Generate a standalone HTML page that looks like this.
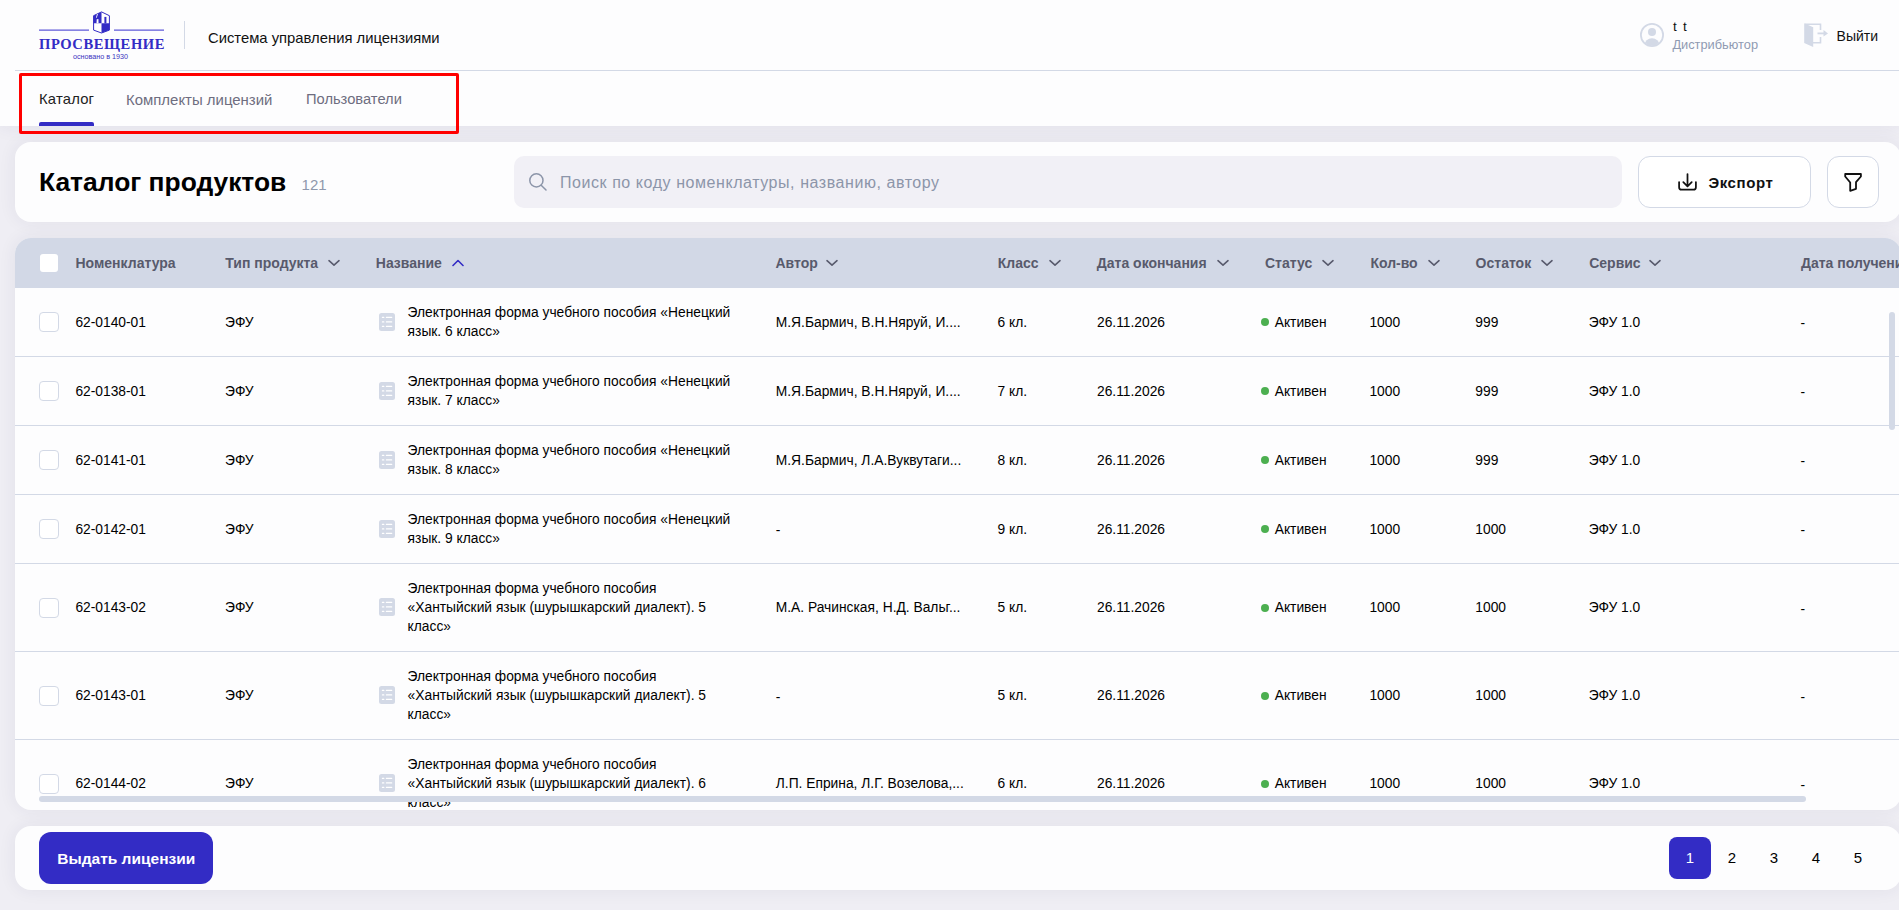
<!DOCTYPE html>
<html><head><meta charset="utf-8"><title>Каталог продуктов</title>
<style>
html,body{margin:0;padding:0;width:1899px;height:910px;overflow:hidden;background:#efeef4;font-family:"Liberation Sans",sans-serif}
.t{position:absolute;white-space:nowrap}
.r{position:absolute}
</style></head><body>
<div class="r" style="left:0px;top:0px;width:1899px;height:126px;background:#fdfdfe;box-shadow:0 0 18px rgba(40,40,90,0.075)"></div><div class="r" style="left:15px;top:70px;width:1884px;height:1px;background:#d3d9e6"></div><svg class="r" style="left:39px;top:0px;" width="126" height="62" viewBox="0 0 126 62">
<line x1="0" y1="30.2" x2="50" y2="30.2" stroke="#5e58d8" stroke-width="1.3"/>
<line x1="75" y1="30.2" x2="125" y2="30.2" stroke="#5e58d8" stroke-width="1.3"/>
<polygon points="62.5,11.9 70.4,15.7 70.4,30.1 62.5,33.0 54.6,30.1 54.6,15.7" fill="#fff" stroke="#332cc5" stroke-width="1.0"/>
<polygon points="54.6,15.7 62.5,11.9 62.5,23.2 54.6,23.2" fill="#332cc5"/>
<polygon points="62.5,23.2 70.4,23.2 70.4,30.1 62.5,33.0" fill="#332cc5"/>
<rect x="65.4" y="16.9" width="2" height="6.4" fill="#332cc5"/>
<polygon points="58.0,14.1 58.9,13.9 57.8,17.7 57.0,17.7" fill="#fff"/>
<polygon points="57.7,19.3 59.4,19.0 59.6,23.3 57.5,23.3" fill="#fff"/>
</svg><div class="t" style="left:39.00px;top:35.58px;font-size:14.6px;line-height:17.52px;font-weight:700;color:#332cc5;font-family:'Liberation Serif',sans-serif;letter-spacing:0.55px">ПРОСВЕЩЕНИЕ</div><div class="t" style="left:73.00px;top:53.19px;font-size:7.2px;line-height:8.64px;font-weight:400;color:#3a34c0;font-family:'Liberation Sans',sans-serif;">основано в 1930</div><div class="r" style="left:184px;top:21px;width:1px;height:28px;background:#d3d9e6"></div><div class="t" style="left:208.00px;top:30.49px;font-size:14.8px;line-height:17.76px;font-weight:400;color:#111;font-family:'Liberation Sans',sans-serif;">Система управления лицензиями</div><svg class="r" style="left:1640px;top:23px;" width="24" height="24" viewBox="0 0 24 24"><circle cx="12" cy="12" r="11.1" fill="none" stroke="#d3d9e6" stroke-width="1.8"/>
<circle cx="12" cy="9" r="4" fill="#d3d9e6"/>
<clipPath id="cc"><circle cx="12" cy="12" r="10.5"/></clipPath>
<ellipse cx="12" cy="22" rx="7.5" ry="6.8" fill="#d3d9e6" clip-path="url(#cc)"/></svg><div class="t" style="left:1673.00px;top:18.82px;font-size:13.5px;line-height:16.20px;font-weight:400;color:#111;font-family:'Liberation Sans',sans-serif;letter-spacing:1.3px">t t</div><div class="t" style="left:1672.40px;top:37.28px;font-size:12.8px;line-height:15.36px;font-weight:400;color:#8f9ab2;font-family:'Liberation Sans',sans-serif;">Дистрибьютор</div><svg class="r" style="left:1804px;top:23px;" width="25" height="25" viewBox="0 0 25 25"><path d="M1 1.2 H16.5 V7" fill="none" stroke="#d3d9e6" stroke-width="1.6"/>
<path d="M9 19.7 H16.5 V14" fill="none" stroke="#d3d9e6" stroke-width="1.6"/>
<polygon points="0.2,0.2 9.2,4.2 9.2,24 0.2,20" fill="#d3d9e6"/>
<line x1="13.5" y1="10.4" x2="20" y2="10.4" stroke="#d3d9e6" stroke-width="1.8"/>
<polygon points="19.5,7 24,10.4 19.5,13.6" fill="#d3d9e6"/></svg><div class="t" style="left:1836.60px;top:27.65px;font-size:14px;line-height:16.80px;font-weight:400;color:#111;font-family:'Liberation Sans',sans-serif;">Выйти</div><div class="t" style="left:39.00px;top:90.69px;font-size:14.8px;line-height:17.76px;font-weight:400;color:#222;font-family:'Liberation Sans',sans-serif;letter-spacing:0.2px">Каталог</div><div class="t" style="left:126.00px;top:90.85px;font-size:14.95px;line-height:17.94px;font-weight:400;color:#6e6d80;font-family:'Liberation Sans',sans-serif;">Комплекты лицензий</div><div class="t" style="left:306.00px;top:91.09px;font-size:14.7px;line-height:17.64px;font-weight:400;color:#6e6d80;font-family:'Liberation Sans',sans-serif;">Пользователи</div><div class="r" style="left:39px;top:122px;width:55px;height:4px;background:#332cc5;border-radius:2px 2px 0 0"></div><div class="r" style="left:15px;top:142px;width:1886px;height:80px;background:#fdfdfe;border-radius:16px;box-shadow:0 0 18px rgba(40,40,90,0.07)"></div><div class="t" style="left:39.00px;top:166.71px;font-size:26.4px;line-height:31.68px;font-weight:700;color:#000;font-family:'Liberation Sans',sans-serif;">Каталог продуктов</div><div class="t" style="left:301.60px;top:176.00px;font-size:15px;line-height:18.00px;font-weight:400;color:#8f98ac;font-family:'Liberation Sans',sans-serif;">121</div><div class="r" style="left:514px;top:156px;width:1108px;height:52px;background:#f1f0f6;border-radius:10px"></div><svg class="r" style="left:528px;top:172px;" width="19" height="19" viewBox="0 0 19 19"><circle cx="8.4" cy="8.4" r="6.6" fill="none" stroke="#8c95a9" stroke-width="1.5"/>
<line x1="13.2" y1="13.2" x2="18" y2="18" stroke="#8c95a9" stroke-width="1.5" stroke-linecap="round"/></svg><div class="t" style="left:560.00px;top:173.16px;font-size:16px;line-height:19.20px;font-weight:400;color:#8c95a9;font-family:'Liberation Sans',sans-serif;letter-spacing:0.56px">Поиск по коду номенклатуры, названию, автору</div><div class="r" style="left:1638px;top:156px;width:173px;height:52px;background:#fff;border:1px solid #d3d9e6;border-radius:12px;box-sizing:border-box"></div><svg class="r" style="left:1678px;top:173px;" width="19" height="19" viewBox="0 0 19 19"><path d="M9.5 1.0 V13.0 M5.3 9.1 L9.5 13.3 L13.7 9.1" fill="none" stroke="#111" stroke-width="1.75" stroke-linecap="round" stroke-linejoin="round"/>
<path d="M1.1 9.0 V14.2 Q1.1 16.7 3.6 16.7 H15.4 Q17.9 16.7 17.9 14.2 V9.0" fill="none" stroke="#111" stroke-width="1.75" stroke-linecap="round"/></svg><div class="t" style="left:1708.40px;top:173.70px;font-size:15px;line-height:18.00px;font-weight:700;color:#111;font-family:'Liberation Sans',sans-serif;letter-spacing:0.6px">Экспорт</div><div class="r" style="left:1827px;top:156px;width:52px;height:52px;background:#fff;border:1px solid #d3d9e6;border-radius:12px;box-sizing:border-box"></div><svg class="r" style="left:1844px;top:173px;" width="19" height="20" viewBox="0 0 19 20"><path d="M1.2 1.0 H16.9 V3.5 L12.0 9.1 V15.8 L6.2 17.8 V9.5 L1.2 3.5 Z" fill="none" stroke="#111" stroke-width="1.8" stroke-linejoin="round"/></svg><div class="r" style="left:15px;top:238px;width:1886px;height:572px;background:#fdfdfe;border-radius:16px;overflow:hidden;box-shadow:0 0 18px rgba(40,40,90,0.07)"><div class="r" style="left:0px;top:0px;width:1884px;height:50px;background:#d2d8e6"></div><div class="r" style="left:25px;top:16px;width:18px;height:18px;background:#fff;border-radius:3px"></div><div class="t" style="left:60.50px;top:17.05px;font-size:14px;line-height:16.80px;font-weight:700;color:#585a6c;font-family:'Liberation Sans',sans-serif;">Номенклатура</div><div class="t" style="left:210.30px;top:17.05px;font-size:14px;line-height:16.80px;font-weight:700;color:#585a6c;font-family:'Liberation Sans',sans-serif;">Тип продукта</div><svg class="r" style="left:313px;top:21px;" width="12" height="8" viewBox="0 0 12 8"><path d="M1 1.7 L6 6.1 L11 1.7" fill="none" stroke="#585a6c" stroke-width="1.6" stroke-linecap="round" stroke-linejoin="round"/></svg><div class="t" style="left:360.80px;top:17.05px;font-size:14px;line-height:16.80px;font-weight:700;color:#585a6c;font-family:'Liberation Sans',sans-serif;">Название</div><svg class="r" style="left:436.8px;top:21px;" width="12" height="8" viewBox="0 0 12 8"><path d="M1 6.5 L6 1.5 L11 6.5" fill="none" stroke="#332cc5" stroke-width="1.6" stroke-linecap="round" stroke-linejoin="round"/></svg><div class="t" style="left:760.50px;top:17.05px;font-size:14px;line-height:16.80px;font-weight:700;color:#585a6c;font-family:'Liberation Sans',sans-serif;">Автор</div><svg class="r" style="left:811px;top:21px;" width="12" height="8" viewBox="0 0 12 8"><path d="M1 1.7 L6 6.1 L11 1.7" fill="none" stroke="#585a6c" stroke-width="1.6" stroke-linecap="round" stroke-linejoin="round"/></svg><div class="t" style="left:982.80px;top:17.05px;font-size:14px;line-height:16.80px;font-weight:700;color:#585a6c;font-family:'Liberation Sans',sans-serif;">Класс</div><svg class="r" style="left:1034.4px;top:21px;" width="12" height="8" viewBox="0 0 12 8"><path d="M1 1.7 L6 6.1 L11 1.7" fill="none" stroke="#585a6c" stroke-width="1.6" stroke-linecap="round" stroke-linejoin="round"/></svg><div class="t" style="left:1081.80px;top:17.05px;font-size:14px;line-height:16.80px;font-weight:700;color:#585a6c;font-family:'Liberation Sans',sans-serif;">Дата окончания</div><svg class="r" style="left:1202px;top:21px;" width="12" height="8" viewBox="0 0 12 8"><path d="M1 1.7 L6 6.1 L11 1.7" fill="none" stroke="#585a6c" stroke-width="1.6" stroke-linecap="round" stroke-linejoin="round"/></svg><div class="t" style="left:1250.00px;top:17.05px;font-size:14px;line-height:16.80px;font-weight:700;color:#585a6c;font-family:'Liberation Sans',sans-serif;">Статус</div><svg class="r" style="left:1307px;top:21px;" width="12" height="8" viewBox="0 0 12 8"><path d="M1 1.7 L6 6.1 L11 1.7" fill="none" stroke="#585a6c" stroke-width="1.6" stroke-linecap="round" stroke-linejoin="round"/></svg><div class="t" style="left:1355.40px;top:17.05px;font-size:14px;line-height:16.80px;font-weight:700;color:#585a6c;font-family:'Liberation Sans',sans-serif;">Кол-во</div><svg class="r" style="left:1412.7px;top:21px;" width="12" height="8" viewBox="0 0 12 8"><path d="M1 1.7 L6 6.1 L11 1.7" fill="none" stroke="#585a6c" stroke-width="1.6" stroke-linecap="round" stroke-linejoin="round"/></svg><div class="t" style="left:1460.60px;top:17.05px;font-size:14px;line-height:16.80px;font-weight:700;color:#585a6c;font-family:'Liberation Sans',sans-serif;">Остаток</div><svg class="r" style="left:1526.2px;top:21px;" width="12" height="8" viewBox="0 0 12 8"><path d="M1 1.7 L6 6.1 L11 1.7" fill="none" stroke="#585a6c" stroke-width="1.6" stroke-linecap="round" stroke-linejoin="round"/></svg><div class="t" style="left:1574.20px;top:17.05px;font-size:14px;line-height:16.80px;font-weight:700;color:#585a6c;font-family:'Liberation Sans',sans-serif;">Сервис</div><svg class="r" style="left:1634px;top:21px;" width="12" height="8" viewBox="0 0 12 8"><path d="M1 1.7 L6 6.1 L11 1.7" fill="none" stroke="#585a6c" stroke-width="1.6" stroke-linecap="round" stroke-linejoin="round"/></svg><div class="t" style="left:1786.00px;top:17.05px;font-size:14px;line-height:16.80px;font-weight:700;color:#585a6c;font-family:'Liberation Sans',sans-serif;">Дата получения</div><div class="r" style="left:24px;top:74px;width:20px;height:20px;border:1px solid #d3d9e6;border-radius:4px;box-sizing:border-box;background:#fff"></div><div class="t" style="left:60.40px;top:76.94px;font-size:13.8px;line-height:16.56px;font-weight:400;color:#000;font-family:'Liberation Sans',sans-serif;">62-0140-01</div><div class="t" style="left:210.00px;top:76.94px;font-size:13.8px;line-height:16.56px;font-weight:400;color:#000;font-family:'Liberation Sans',sans-serif;">ЭФУ</div><svg class="r" style="left:364px;top:75px;" width="16" height="18" viewBox="0 0 16 18"><rect x="0" y="0" width="16" height="18" rx="2.5" fill="#d3d9e6"/>
<g fill="#fff"><rect x="2.8" y="3.8" width="2.6" height="1.3" rx="0.6"/><rect x="6.8" y="3.8" width="6.5" height="1.3" rx="0.6"/>
<rect x="2.8" y="8.3" width="2.6" height="1.3" rx="0.6"/><rect x="6.8" y="8.3" width="6.5" height="1.3" rx="0.6"/>
<rect x="2.8" y="12.8" width="2.6" height="1.3" rx="0.6"/><rect x="6.8" y="12.8" width="6.5" height="1.3" rx="0.6"/></g></svg><div class="t" style="left:392.60px;top:67.44px;font-size:13.8px;line-height:16.56px;font-weight:400;color:#000;font-family:'Liberation Sans',sans-serif;">Электронная форма учебного пособия «Ненецкий</div><div class="t" style="left:392.60px;top:86.44px;font-size:13.8px;line-height:16.56px;font-weight:400;color:#000;font-family:'Liberation Sans',sans-serif;">язык. 6 класс»</div><div class="t" style="left:760.80px;top:76.94px;font-size:13.8px;line-height:16.56px;font-weight:400;color:#000;font-family:'Liberation Sans',sans-serif;">М.Я.Бармич, В.Н.Няруй, И....</div><div class="t" style="left:982.50px;top:76.94px;font-size:13.8px;line-height:16.56px;font-weight:400;color:#000;font-family:'Liberation Sans',sans-serif;">6 кл.</div><div class="t" style="left:1082.00px;top:76.94px;font-size:13.8px;line-height:16.56px;font-weight:400;color:#000;font-family:'Liberation Sans',sans-serif;">26.11.2026</div><div class="r" style="left:1246px;top:80px;width:8px;height:8px;background:#4caf50;border-radius:50%"></div><div class="t" style="left:1259.70px;top:76.94px;font-size:13.8px;line-height:16.56px;font-weight:400;color:#000;font-family:'Liberation Sans',sans-serif;">Активен</div><div class="t" style="left:1354.40px;top:76.94px;font-size:13.8px;line-height:16.56px;font-weight:400;color:#000;font-family:'Liberation Sans',sans-serif;">1000</div><div class="t" style="left:1460.30px;top:76.94px;font-size:13.8px;line-height:16.56px;font-weight:400;color:#000;font-family:'Liberation Sans',sans-serif;">999</div><div class="t" style="left:1573.70px;top:76.94px;font-size:13.8px;line-height:16.56px;font-weight:400;color:#000;font-family:'Liberation Sans',sans-serif;">ЭФУ 1.0</div><div class="t" style="left:1785.40px;top:78.44px;font-size:13.8px;line-height:16.56px;font-weight:400;color:#000;font-family:'Liberation Sans',sans-serif;">-</div><div class="r" style="left:0px;top:118px;width:1884px;height:1px;background:#d3d9e6"></div><div class="r" style="left:24px;top:143px;width:20px;height:20px;border:1px solid #d3d9e6;border-radius:4px;box-sizing:border-box;background:#fff"></div><div class="t" style="left:60.40px;top:145.94px;font-size:13.8px;line-height:16.56px;font-weight:400;color:#000;font-family:'Liberation Sans',sans-serif;">62-0138-01</div><div class="t" style="left:210.00px;top:145.94px;font-size:13.8px;line-height:16.56px;font-weight:400;color:#000;font-family:'Liberation Sans',sans-serif;">ЭФУ</div><svg class="r" style="left:364px;top:144px;" width="16" height="18" viewBox="0 0 16 18"><rect x="0" y="0" width="16" height="18" rx="2.5" fill="#d3d9e6"/>
<g fill="#fff"><rect x="2.8" y="3.8" width="2.6" height="1.3" rx="0.6"/><rect x="6.8" y="3.8" width="6.5" height="1.3" rx="0.6"/>
<rect x="2.8" y="8.3" width="2.6" height="1.3" rx="0.6"/><rect x="6.8" y="8.3" width="6.5" height="1.3" rx="0.6"/>
<rect x="2.8" y="12.8" width="2.6" height="1.3" rx="0.6"/><rect x="6.8" y="12.8" width="6.5" height="1.3" rx="0.6"/></g></svg><div class="t" style="left:392.60px;top:136.44px;font-size:13.8px;line-height:16.56px;font-weight:400;color:#000;font-family:'Liberation Sans',sans-serif;">Электронная форма учебного пособия «Ненецкий</div><div class="t" style="left:392.60px;top:155.44px;font-size:13.8px;line-height:16.56px;font-weight:400;color:#000;font-family:'Liberation Sans',sans-serif;">язык. 7 класс»</div><div class="t" style="left:760.80px;top:145.94px;font-size:13.8px;line-height:16.56px;font-weight:400;color:#000;font-family:'Liberation Sans',sans-serif;">М.Я.Бармич, В.Н.Няруй, И....</div><div class="t" style="left:982.50px;top:145.94px;font-size:13.8px;line-height:16.56px;font-weight:400;color:#000;font-family:'Liberation Sans',sans-serif;">7 кл.</div><div class="t" style="left:1082.00px;top:145.94px;font-size:13.8px;line-height:16.56px;font-weight:400;color:#000;font-family:'Liberation Sans',sans-serif;">26.11.2026</div><div class="r" style="left:1246px;top:149px;width:8px;height:8px;background:#4caf50;border-radius:50%"></div><div class="t" style="left:1259.70px;top:145.94px;font-size:13.8px;line-height:16.56px;font-weight:400;color:#000;font-family:'Liberation Sans',sans-serif;">Активен</div><div class="t" style="left:1354.40px;top:145.94px;font-size:13.8px;line-height:16.56px;font-weight:400;color:#000;font-family:'Liberation Sans',sans-serif;">1000</div><div class="t" style="left:1460.30px;top:145.94px;font-size:13.8px;line-height:16.56px;font-weight:400;color:#000;font-family:'Liberation Sans',sans-serif;">999</div><div class="t" style="left:1573.70px;top:145.94px;font-size:13.8px;line-height:16.56px;font-weight:400;color:#000;font-family:'Liberation Sans',sans-serif;">ЭФУ 1.0</div><div class="t" style="left:1785.40px;top:147.44px;font-size:13.8px;line-height:16.56px;font-weight:400;color:#000;font-family:'Liberation Sans',sans-serif;">-</div><div class="r" style="left:0px;top:187px;width:1884px;height:1px;background:#d3d9e6"></div><div class="r" style="left:24px;top:212px;width:20px;height:20px;border:1px solid #d3d9e6;border-radius:4px;box-sizing:border-box;background:#fff"></div><div class="t" style="left:60.40px;top:214.94px;font-size:13.8px;line-height:16.56px;font-weight:400;color:#000;font-family:'Liberation Sans',sans-serif;">62-0141-01</div><div class="t" style="left:210.00px;top:214.94px;font-size:13.8px;line-height:16.56px;font-weight:400;color:#000;font-family:'Liberation Sans',sans-serif;">ЭФУ</div><svg class="r" style="left:364px;top:213px;" width="16" height="18" viewBox="0 0 16 18"><rect x="0" y="0" width="16" height="18" rx="2.5" fill="#d3d9e6"/>
<g fill="#fff"><rect x="2.8" y="3.8" width="2.6" height="1.3" rx="0.6"/><rect x="6.8" y="3.8" width="6.5" height="1.3" rx="0.6"/>
<rect x="2.8" y="8.3" width="2.6" height="1.3" rx="0.6"/><rect x="6.8" y="8.3" width="6.5" height="1.3" rx="0.6"/>
<rect x="2.8" y="12.8" width="2.6" height="1.3" rx="0.6"/><rect x="6.8" y="12.8" width="6.5" height="1.3" rx="0.6"/></g></svg><div class="t" style="left:392.60px;top:205.44px;font-size:13.8px;line-height:16.56px;font-weight:400;color:#000;font-family:'Liberation Sans',sans-serif;">Электронная форма учебного пособия «Ненецкий</div><div class="t" style="left:392.60px;top:224.44px;font-size:13.8px;line-height:16.56px;font-weight:400;color:#000;font-family:'Liberation Sans',sans-serif;">язык. 8 класс»</div><div class="t" style="left:760.80px;top:214.94px;font-size:13.8px;line-height:16.56px;font-weight:400;color:#000;font-family:'Liberation Sans',sans-serif;">М.Я.Бармич, Л.А.Вуквутаги...</div><div class="t" style="left:982.50px;top:214.94px;font-size:13.8px;line-height:16.56px;font-weight:400;color:#000;font-family:'Liberation Sans',sans-serif;">8 кл.</div><div class="t" style="left:1082.00px;top:214.94px;font-size:13.8px;line-height:16.56px;font-weight:400;color:#000;font-family:'Liberation Sans',sans-serif;">26.11.2026</div><div class="r" style="left:1246px;top:218px;width:8px;height:8px;background:#4caf50;border-radius:50%"></div><div class="t" style="left:1259.70px;top:214.94px;font-size:13.8px;line-height:16.56px;font-weight:400;color:#000;font-family:'Liberation Sans',sans-serif;">Активен</div><div class="t" style="left:1354.40px;top:214.94px;font-size:13.8px;line-height:16.56px;font-weight:400;color:#000;font-family:'Liberation Sans',sans-serif;">1000</div><div class="t" style="left:1460.30px;top:214.94px;font-size:13.8px;line-height:16.56px;font-weight:400;color:#000;font-family:'Liberation Sans',sans-serif;">999</div><div class="t" style="left:1573.70px;top:214.94px;font-size:13.8px;line-height:16.56px;font-weight:400;color:#000;font-family:'Liberation Sans',sans-serif;">ЭФУ 1.0</div><div class="t" style="left:1785.40px;top:216.44px;font-size:13.8px;line-height:16.56px;font-weight:400;color:#000;font-family:'Liberation Sans',sans-serif;">-</div><div class="r" style="left:0px;top:256px;width:1884px;height:1px;background:#d3d9e6"></div><div class="r" style="left:24px;top:281px;width:20px;height:20px;border:1px solid #d3d9e6;border-radius:4px;box-sizing:border-box;background:#fff"></div><div class="t" style="left:60.40px;top:283.94px;font-size:13.8px;line-height:16.56px;font-weight:400;color:#000;font-family:'Liberation Sans',sans-serif;">62-0142-01</div><div class="t" style="left:210.00px;top:283.94px;font-size:13.8px;line-height:16.56px;font-weight:400;color:#000;font-family:'Liberation Sans',sans-serif;">ЭФУ</div><svg class="r" style="left:364px;top:282px;" width="16" height="18" viewBox="0 0 16 18"><rect x="0" y="0" width="16" height="18" rx="2.5" fill="#d3d9e6"/>
<g fill="#fff"><rect x="2.8" y="3.8" width="2.6" height="1.3" rx="0.6"/><rect x="6.8" y="3.8" width="6.5" height="1.3" rx="0.6"/>
<rect x="2.8" y="8.3" width="2.6" height="1.3" rx="0.6"/><rect x="6.8" y="8.3" width="6.5" height="1.3" rx="0.6"/>
<rect x="2.8" y="12.8" width="2.6" height="1.3" rx="0.6"/><rect x="6.8" y="12.8" width="6.5" height="1.3" rx="0.6"/></g></svg><div class="t" style="left:392.60px;top:274.44px;font-size:13.8px;line-height:16.56px;font-weight:400;color:#000;font-family:'Liberation Sans',sans-serif;">Электронная форма учебного пособия «Ненецкий</div><div class="t" style="left:392.60px;top:293.44px;font-size:13.8px;line-height:16.56px;font-weight:400;color:#000;font-family:'Liberation Sans',sans-serif;">язык. 9 класс»</div><div class="t" style="left:760.80px;top:285.44px;font-size:13.8px;line-height:16.56px;font-weight:400;color:#000;font-family:'Liberation Sans',sans-serif;">-</div><div class="t" style="left:982.50px;top:283.94px;font-size:13.8px;line-height:16.56px;font-weight:400;color:#000;font-family:'Liberation Sans',sans-serif;">9 кл.</div><div class="t" style="left:1082.00px;top:283.94px;font-size:13.8px;line-height:16.56px;font-weight:400;color:#000;font-family:'Liberation Sans',sans-serif;">26.11.2026</div><div class="r" style="left:1246px;top:287px;width:8px;height:8px;background:#4caf50;border-radius:50%"></div><div class="t" style="left:1259.70px;top:283.94px;font-size:13.8px;line-height:16.56px;font-weight:400;color:#000;font-family:'Liberation Sans',sans-serif;">Активен</div><div class="t" style="left:1354.40px;top:283.94px;font-size:13.8px;line-height:16.56px;font-weight:400;color:#000;font-family:'Liberation Sans',sans-serif;">1000</div><div class="t" style="left:1460.30px;top:283.94px;font-size:13.8px;line-height:16.56px;font-weight:400;color:#000;font-family:'Liberation Sans',sans-serif;">1000</div><div class="t" style="left:1573.70px;top:283.94px;font-size:13.8px;line-height:16.56px;font-weight:400;color:#000;font-family:'Liberation Sans',sans-serif;">ЭФУ 1.0</div><div class="t" style="left:1785.40px;top:285.44px;font-size:13.8px;line-height:16.56px;font-weight:400;color:#000;font-family:'Liberation Sans',sans-serif;">-</div><div class="r" style="left:0px;top:325px;width:1884px;height:1px;background:#d3d9e6"></div><div class="r" style="left:24px;top:360px;width:20px;height:20px;border:1px solid #d3d9e6;border-radius:4px;box-sizing:border-box;background:#fff"></div><div class="t" style="left:60.40px;top:362.44px;font-size:13.8px;line-height:16.56px;font-weight:400;color:#000;font-family:'Liberation Sans',sans-serif;">62-0143-02</div><div class="t" style="left:210.00px;top:362.44px;font-size:13.8px;line-height:16.56px;font-weight:400;color:#000;font-family:'Liberation Sans',sans-serif;">ЭФУ</div><svg class="r" style="left:364px;top:360px;" width="16" height="18" viewBox="0 0 16 18"><rect x="0" y="0" width="16" height="18" rx="2.5" fill="#d3d9e6"/>
<g fill="#fff"><rect x="2.8" y="3.8" width="2.6" height="1.3" rx="0.6"/><rect x="6.8" y="3.8" width="6.5" height="1.3" rx="0.6"/>
<rect x="2.8" y="8.3" width="2.6" height="1.3" rx="0.6"/><rect x="6.8" y="8.3" width="6.5" height="1.3" rx="0.6"/>
<rect x="2.8" y="12.8" width="2.6" height="1.3" rx="0.6"/><rect x="6.8" y="12.8" width="6.5" height="1.3" rx="0.6"/></g></svg><div class="t" style="left:392.60px;top:343.44px;font-size:13.8px;line-height:16.56px;font-weight:400;color:#000;font-family:'Liberation Sans',sans-serif;">Электронная форма учебного пособия</div><div class="t" style="left:392.60px;top:362.44px;font-size:13.8px;line-height:16.56px;font-weight:400;color:#000;font-family:'Liberation Sans',sans-serif;">«Хантыйский язык (шурышкарский диалект). 5</div><div class="t" style="left:392.60px;top:381.44px;font-size:13.8px;line-height:16.56px;font-weight:400;color:#000;font-family:'Liberation Sans',sans-serif;">класс»</div><div class="t" style="left:760.80px;top:362.44px;font-size:13.8px;line-height:16.56px;font-weight:400;color:#000;font-family:'Liberation Sans',sans-serif;">М.А. Рачинская, Н.Д. Вальг...</div><div class="t" style="left:982.50px;top:362.44px;font-size:13.8px;line-height:16.56px;font-weight:400;color:#000;font-family:'Liberation Sans',sans-serif;">5 кл.</div><div class="t" style="left:1082.00px;top:362.44px;font-size:13.8px;line-height:16.56px;font-weight:400;color:#000;font-family:'Liberation Sans',sans-serif;">26.11.2026</div><div class="r" style="left:1246px;top:366px;width:8px;height:8px;background:#4caf50;border-radius:50%"></div><div class="t" style="left:1259.70px;top:362.44px;font-size:13.8px;line-height:16.56px;font-weight:400;color:#000;font-family:'Liberation Sans',sans-serif;">Активен</div><div class="t" style="left:1354.40px;top:362.44px;font-size:13.8px;line-height:16.56px;font-weight:400;color:#000;font-family:'Liberation Sans',sans-serif;">1000</div><div class="t" style="left:1460.30px;top:362.44px;font-size:13.8px;line-height:16.56px;font-weight:400;color:#000;font-family:'Liberation Sans',sans-serif;">1000</div><div class="t" style="left:1573.70px;top:362.44px;font-size:13.8px;line-height:16.56px;font-weight:400;color:#000;font-family:'Liberation Sans',sans-serif;">ЭФУ 1.0</div><div class="t" style="left:1785.40px;top:363.94px;font-size:13.8px;line-height:16.56px;font-weight:400;color:#000;font-family:'Liberation Sans',sans-serif;">-</div><div class="r" style="left:0px;top:413px;width:1884px;height:1px;background:#d3d9e6"></div><div class="r" style="left:24px;top:448px;width:20px;height:20px;border:1px solid #d3d9e6;border-radius:4px;box-sizing:border-box;background:#fff"></div><div class="t" style="left:60.40px;top:450.44px;font-size:13.8px;line-height:16.56px;font-weight:400;color:#000;font-family:'Liberation Sans',sans-serif;">62-0143-01</div><div class="t" style="left:210.00px;top:450.44px;font-size:13.8px;line-height:16.56px;font-weight:400;color:#000;font-family:'Liberation Sans',sans-serif;">ЭФУ</div><svg class="r" style="left:364px;top:448px;" width="16" height="18" viewBox="0 0 16 18"><rect x="0" y="0" width="16" height="18" rx="2.5" fill="#d3d9e6"/>
<g fill="#fff"><rect x="2.8" y="3.8" width="2.6" height="1.3" rx="0.6"/><rect x="6.8" y="3.8" width="6.5" height="1.3" rx="0.6"/>
<rect x="2.8" y="8.3" width="2.6" height="1.3" rx="0.6"/><rect x="6.8" y="8.3" width="6.5" height="1.3" rx="0.6"/>
<rect x="2.8" y="12.8" width="2.6" height="1.3" rx="0.6"/><rect x="6.8" y="12.8" width="6.5" height="1.3" rx="0.6"/></g></svg><div class="t" style="left:392.60px;top:431.44px;font-size:13.8px;line-height:16.56px;font-weight:400;color:#000;font-family:'Liberation Sans',sans-serif;">Электронная форма учебного пособия</div><div class="t" style="left:392.60px;top:450.44px;font-size:13.8px;line-height:16.56px;font-weight:400;color:#000;font-family:'Liberation Sans',sans-serif;">«Хантыйский язык (шурышкарский диалект). 5</div><div class="t" style="left:392.60px;top:469.44px;font-size:13.8px;line-height:16.56px;font-weight:400;color:#000;font-family:'Liberation Sans',sans-serif;">класс»</div><div class="t" style="left:760.80px;top:451.94px;font-size:13.8px;line-height:16.56px;font-weight:400;color:#000;font-family:'Liberation Sans',sans-serif;">-</div><div class="t" style="left:982.50px;top:450.44px;font-size:13.8px;line-height:16.56px;font-weight:400;color:#000;font-family:'Liberation Sans',sans-serif;">5 кл.</div><div class="t" style="left:1082.00px;top:450.44px;font-size:13.8px;line-height:16.56px;font-weight:400;color:#000;font-family:'Liberation Sans',sans-serif;">26.11.2026</div><div class="r" style="left:1246px;top:454px;width:8px;height:8px;background:#4caf50;border-radius:50%"></div><div class="t" style="left:1259.70px;top:450.44px;font-size:13.8px;line-height:16.56px;font-weight:400;color:#000;font-family:'Liberation Sans',sans-serif;">Активен</div><div class="t" style="left:1354.40px;top:450.44px;font-size:13.8px;line-height:16.56px;font-weight:400;color:#000;font-family:'Liberation Sans',sans-serif;">1000</div><div class="t" style="left:1460.30px;top:450.44px;font-size:13.8px;line-height:16.56px;font-weight:400;color:#000;font-family:'Liberation Sans',sans-serif;">1000</div><div class="t" style="left:1573.70px;top:450.44px;font-size:13.8px;line-height:16.56px;font-weight:400;color:#000;font-family:'Liberation Sans',sans-serif;">ЭФУ 1.0</div><div class="t" style="left:1785.40px;top:451.94px;font-size:13.8px;line-height:16.56px;font-weight:400;color:#000;font-family:'Liberation Sans',sans-serif;">-</div><div class="r" style="left:0px;top:501px;width:1884px;height:1px;background:#d3d9e6"></div><div class="r" style="left:24px;top:536px;width:20px;height:20px;border:1px solid #d3d9e6;border-radius:4px;box-sizing:border-box;background:#fff"></div><div class="t" style="left:60.40px;top:538.44px;font-size:13.8px;line-height:16.56px;font-weight:400;color:#000;font-family:'Liberation Sans',sans-serif;">62-0144-02</div><div class="t" style="left:210.00px;top:538.44px;font-size:13.8px;line-height:16.56px;font-weight:400;color:#000;font-family:'Liberation Sans',sans-serif;">ЭФУ</div><svg class="r" style="left:364px;top:536px;" width="16" height="18" viewBox="0 0 16 18"><rect x="0" y="0" width="16" height="18" rx="2.5" fill="#d3d9e6"/>
<g fill="#fff"><rect x="2.8" y="3.8" width="2.6" height="1.3" rx="0.6"/><rect x="6.8" y="3.8" width="6.5" height="1.3" rx="0.6"/>
<rect x="2.8" y="8.3" width="2.6" height="1.3" rx="0.6"/><rect x="6.8" y="8.3" width="6.5" height="1.3" rx="0.6"/>
<rect x="2.8" y="12.8" width="2.6" height="1.3" rx="0.6"/><rect x="6.8" y="12.8" width="6.5" height="1.3" rx="0.6"/></g></svg><div class="t" style="left:392.60px;top:519.44px;font-size:13.8px;line-height:16.56px;font-weight:400;color:#000;font-family:'Liberation Sans',sans-serif;">Электронная форма учебного пособия</div><div class="t" style="left:392.60px;top:538.44px;font-size:13.8px;line-height:16.56px;font-weight:400;color:#000;font-family:'Liberation Sans',sans-serif;">«Хантыйский язык (шурышкарский диалект). 6</div><div class="t" style="left:392.60px;top:557.44px;font-size:13.8px;line-height:16.56px;font-weight:400;color:#000;font-family:'Liberation Sans',sans-serif;">класс»</div><div class="t" style="left:760.80px;top:538.44px;font-size:13.8px;line-height:16.56px;font-weight:400;color:#000;font-family:'Liberation Sans',sans-serif;">Л.П. Еприна, Л.Г. Возелова,...</div><div class="t" style="left:982.50px;top:538.44px;font-size:13.8px;line-height:16.56px;font-weight:400;color:#000;font-family:'Liberation Sans',sans-serif;">6 кл.</div><div class="t" style="left:1082.00px;top:538.44px;font-size:13.8px;line-height:16.56px;font-weight:400;color:#000;font-family:'Liberation Sans',sans-serif;">26.11.2026</div><div class="r" style="left:1246px;top:542px;width:8px;height:8px;background:#4caf50;border-radius:50%"></div><div class="t" style="left:1259.70px;top:538.44px;font-size:13.8px;line-height:16.56px;font-weight:400;color:#000;font-family:'Liberation Sans',sans-serif;">Активен</div><div class="t" style="left:1354.40px;top:538.44px;font-size:13.8px;line-height:16.56px;font-weight:400;color:#000;font-family:'Liberation Sans',sans-serif;">1000</div><div class="t" style="left:1460.30px;top:538.44px;font-size:13.8px;line-height:16.56px;font-weight:400;color:#000;font-family:'Liberation Sans',sans-serif;">1000</div><div class="t" style="left:1573.70px;top:538.44px;font-size:13.8px;line-height:16.56px;font-weight:400;color:#000;font-family:'Liberation Sans',sans-serif;">ЭФУ 1.0</div><div class="t" style="left:1785.40px;top:539.94px;font-size:13.8px;line-height:16.56px;font-weight:400;color:#000;font-family:'Liberation Sans',sans-serif;">-</div><div class="r" style="left:0px;top:589px;width:1884px;height:1px;background:#d3d9e6"></div><div class="r" style="left:1874px;top:74px;width:6px;height:118px;background:#d3d9e6;border-radius:3px"></div><div class="r" style="left:24px;top:558px;width:1767px;height:6px;background:#d3d9e6;border-radius:3px"></div></div><div class="r" style="left:15px;top:826px;width:1886px;height:64px;background:#fdfdfe;border-radius:16px;box-shadow:0 0 18px rgba(40,40,90,0.07)"></div><div class="r" style="left:39px;top:832px;width:174px;height:52px;background:#332cc5;border-radius:12px"></div><div class="t" style="left:57.30px;top:849.63px;font-size:15.5px;line-height:18.60px;font-weight:700;color:#fff;font-family:'Liberation Sans',sans-serif;">Выдать лицензии</div><div class="r" style="left:1669px;top:837px;width:42px;height:42px;background:#332cc5;border-radius:8px"></div><div class="t" style="left:1690.00px;top:849.10px;font-size:15px;line-height:18.00px;font-weight:400;color:#fff;font-family:'Liberation Sans',sans-serif;transform:translateX(-50%)">1</div><div class="t" style="left:1732.00px;top:849.10px;font-size:15px;line-height:18.00px;font-weight:400;color:#000;font-family:'Liberation Sans',sans-serif;transform:translateX(-50%)">2</div><div class="t" style="left:1774.00px;top:849.10px;font-size:15px;line-height:18.00px;font-weight:400;color:#000;font-family:'Liberation Sans',sans-serif;transform:translateX(-50%)">3</div><div class="t" style="left:1816.00px;top:849.10px;font-size:15px;line-height:18.00px;font-weight:400;color:#000;font-family:'Liberation Sans',sans-serif;transform:translateX(-50%)">4</div><div class="t" style="left:1858.00px;top:849.10px;font-size:15px;line-height:18.00px;font-weight:400;color:#000;font-family:'Liberation Sans',sans-serif;transform:translateX(-50%)">5</div><div class="r" style="left:19px;top:73px;width:440px;height:61px;border:3px solid #f00;border-radius:2px;box-sizing:border-box"></div>
</body></html>
